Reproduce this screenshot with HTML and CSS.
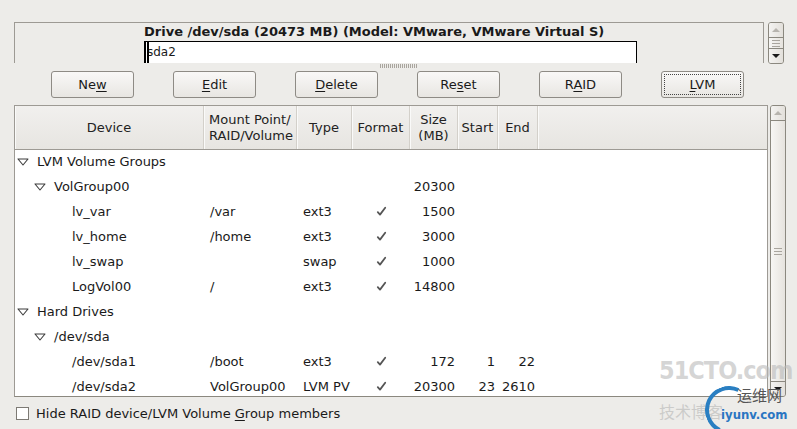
FILE: index.html
```html
<!DOCTYPE html>
<html lang="en">
<head>
    <meta charset="UTF-8">
    <title>Partitioning</title>
    <link rel="stylesheet" href="styles.css">
</head>
<body>
    <div class="drive-row">
        <div class="drive-frame">
            <div class="drive-info">
                <div class="drive-title">Drive /dev/sda (20473 MB) (Model: VMware, VMware Virtual S)</div>
                <div class="drive-bar"><span class="sel"></span>sda2</div>
            </div>
        </div>
        <div class="vscroll small">
            <div class="sb-btn up"><span class="arrow-up"></span></div>
            <div class="sb-thumb"><span class="grip"></span></div>
            <div class="sb-btn down"><span class="arrow-down"></span></div>
        </div>
    </div>

    <div class="pane-grip"><span></span></div>

    <div class="buttons">
        <button class="btn">Ne<u>w</u></button>
        <button class="btn"><u>E</u>dit</button>
        <button class="btn"><u>D</u>elete</button>
        <button class="btn">Re<u>s</u>et</button>
        <button class="btn">R<u>A</u>ID</button>
        <button class="btn focus"><u>L</u>VM</button>
    </div>

    <div class="tree-row">
        <div class="tree">
            <div class="grid head">
                <div class="th">Device</div>
                <div class="th left">Mount Point/<br>RAID/Volume</div>
                <div class="th">Type</div>
                <div class="th">Format</div>
                <div class="th">Size<br>(MB)</div>
                <div class="th">Start</div>
                <div class="th">End</div>
                <div class="th last"></div>
            </div>
            <div id="rows"></div>
        </div>
        <div class="vscroll big">
            <div class="sb-btn up"><span class="arrow-up"></span></div>
            <div class="sb-thumb"><span class="grip"></span></div>
            <div class="sb-btn down"><span class="arrow-down"></span></div>
        </div>
    </div>

    <label class="hide-opt"><span class="checkbox"></span><span>Hide RAID device/LVM Volume <u>G</u>roup members</span></label>

    <div class="watermark">
        <div class="wm-51">51CTO.com</div>
        <div class="wm-blog">技术博客</div>
        <div class="wm-ring"></div>
        <div class="wm-cn">运维网</div>
        <div class="wm-site">iyunv.com</div>
    </div>

    <script>
        const rows = [
            { lvl: 0, exp: true, dev: 'LVM Volume Groups' },
            { lvl: 1, exp: true, dev: 'VolGroup00', size: '20300' },
            { lvl: 2, dev: 'lv_var', mount: '/var', type: 'ext3', fmt: true, size: '1500' },
            { lvl: 2, dev: 'lv_home', mount: '/home', type: 'ext3', fmt: true, size: '3000' },
            { lvl: 2, dev: 'lv_swap', mount: '', type: 'swap', fmt: true, size: '1000' },
            { lvl: 2, dev: 'LogVol00', mount: '/', type: 'ext3', fmt: true, size: '14800' },
            { lvl: 0, exp: true, dev: 'Hard Drives' },
            { lvl: 1, exp: true, dev: '/dev/sda' },
            { lvl: 2, dev: '/dev/sda1', mount: '/boot', type: 'ext3', fmt: true, size: '172', start: '1', end: '22' },
            { lvl: 2, dev: '/dev/sda2', mount: 'VolGroup00', type: 'LVM PV', fmt: true, size: '20300', start: '23', end: '2610' }
        ];

        const expander = '<svg class="expander" width="12" height="8" viewBox="0 0 12 8"><polygon points="1,1 11,1 6,7" fill="#fff" stroke="#3c3c3c" stroke-width="1.1" stroke-linejoin="round"/></svg>';
        const check = '<svg width="11" height="11" viewBox="0 0 11 11"><path d="M1.8 6.2 L4 8.6 L9.2 1.8" fill="none" stroke="#555" stroke-width="1.8" stroke-linecap="round" stroke-linejoin="round"/></svg>';

        const box = document.getElementById('rows');
        rows.forEach(r => {
            const row = document.createElement('div');
            row.className = 'grid row';
            row.innerHTML =
                `<div class="td dev lvl${r.lvl}">${r.exp ? expander : ''}<span>${r.dev}</span></div>` +
                `<div class="td">${r.mount || ''}</div>` +
                `<div class="td">${r.type || ''}</div>` +
                `<div class="td center">${r.fmt ? check : ''}</div>` +
                `<div class="td num">${r.size || ''}</div>` +
                `<div class="td num">${r.start || ''}</div>` +
                `<div class="td num">${r.end || ''}</div>` +
                `<div class="td"></div>`;
            box.appendChild(row);
        });
    </script>
</body>
</html>
```

FILE: styles.css
```css
body {
    background-color: #edece9;
    color: #1a1a1a;
    font-family: "DejaVu Sans", sans-serif;
    font-size: 13px;
    margin: 0;
    padding: 0;
    width: 797px;
    height: 429px;
    overflow: hidden;
    position: relative;
}
u {
    text-decoration-thickness: 1px;
    text-underline-offset: 2px;
}

/* drive strip */
.drive-row {
    display: flex;
    padding: 22px 0 0 14px;
    height: 41px;
}
.drive-frame {
    width: 748px;
    border: 1px solid #9d9a94;
    border-bottom: none;
    background-color: #edece9;
}
.drive-info {
    margin-left: 129px;
}
.drive-title {
    font-weight: bold;
    height: 18px;
    line-height: 18px;
}
.drive-bar {
    width: 489px;
    height: 21px;
    line-height: 21px;
    background-color: #fff;
    border: 1px solid #000;
    border-bottom: none;
    border-left-width: 2px;
    font-size: 12px;
    padding-left: 1px;
    position: relative;
}
.drive-bar .sel {
    position: absolute;
    left: 1px;
    top: 0;
    bottom: 0;
    width: 2px;
    background-color: #000;
}
.drive-row .vscroll {
    margin-left: 4px;
    height: 40px;
}

/* scrollbars */
.vscroll {
    width: 14px;
    border: 1px solid #8b887f;
    border-radius: 3px;
    background-color: #e2dfda;
    display: flex;
    flex-direction: column;
    overflow: hidden;
}
.sb-btn {
    height: 14px;
    display: flex;
    align-items: center;
    justify-content: center;
    background: linear-gradient(to right, #f4f3f1, #e3e0db);
}
.sb-btn.up {
    border-bottom: 1px solid #8b887f;
}
.sb-btn.down {
    border-top: 1px solid #8b887f;
}
.sb-thumb {
    flex: 1;
    display: flex;
    align-items: center;
    justify-content: center;
    background: linear-gradient(to right, #f7f6f4, #e6e3de);
}
.grip {
    width: 8px;
    height: 5px;
    border-top: 1px solid #a9a59e;
    border-bottom: 1px solid #a9a59e;
    position: relative;
}
.grip::after {
    content: "";
    position: absolute;
    left: 0;
    right: 0;
    top: 2px;
    border-top: 1px solid #a9a59e;
}
.arrow-up {
    width: 0;
    height: 0;
    border-left: 4px solid transparent;
    border-right: 4px solid transparent;
    border-bottom: 4px solid #b7b4ae;
}
.arrow-down {
    width: 0;
    height: 0;
    border-left: 4px solid transparent;
    border-right: 4px solid transparent;
    border-top: 4px solid #1a1a1a;
}

/* paned grip */
.pane-grip {
    height: 8px;
    display: flex;
    justify-content: center;
}
.pane-grip span {
    margin-top: 1px;
    width: 38px;
    height: 4px;
    background: repeating-linear-gradient(to right, #a9a59e 0 1px, transparent 1px 2px);
}

/* buttons */
.buttons {
    display: flex;
    gap: 39px;
    padding-left: 51px;
    height: 27px;
}
.btn {
    width: 83px;
    height: 27px;
    font-family: "DejaVu Sans", sans-serif;
    font-size: 13px;
    color: #1a1a1a;
    border: 1px solid #8e8b85;
    border-radius: 3px;
    background: linear-gradient(to bottom, #f9f8f7, #e8e6e2);
    padding: 0;
}
.btn.focus {
    outline: 1px dotted #444;
    outline-offset: -4px;
}

/* tree view */
.tree-row {
    display: flex;
    margin-top: 7px;
    padding-left: 14px;
    height: 292px;
}
.tree {
    width: 752px;
    border: 1px solid #9d9a94;
    border-bottom-color: #8b887f;
    background-color: #fff;
    overflow: hidden;
}
.tree-row .vscroll {
    margin-left: 2px;
    height: 290px;
}
.grid {
    display: grid;
    grid-template-columns: 189px 93px 55px 58px 48px 40px 40px 1fr;
}
.head {
    height: 43px;
    border-bottom: 1px solid #9d9a94;
    background: linear-gradient(to bottom, #f1f0ee, #e7e5e1);
}
.th {
    display: flex;
    align-items: center;
    justify-content: center;
    text-align: center;
    line-height: 16px;
    color: #222;
    border-right: 1px solid #d3d0ca;
    box-shadow: inset 1px 0 0 #fafaf9;
}
.th.left {
    text-align: left;
    justify-content: flex-start;
    padding-left: 5px;
}
.th.last {
    border-right: none;
}
.row {
    height: 25px;
}
.td {
    display: flex;
    align-items: center;
    white-space: nowrap;
    padding-left: 6px;
    padding-bottom: 2px;
    color: #1a1a1a;
}
.td.center {
    justify-content: center;
    padding-left: 0;
}
.td.num {
    justify-content: flex-end;
    padding-left: 0;
    padding-right: 3px;
}
.td.dev {
    padding-left: 0;
}
.expander {
    margin-left: 2px;
    margin-right: 8px;
}
.lvl1 .expander {
    margin-left: 19px;
    margin-right: 8px;
}
.td.lvl2 {
    padding-left: 57px;
}

/* option */
.hide-opt {
    display: flex;
    align-items: center;
    margin: 7px 0 0 16px;
    height: 18px;
}
.checkbox {
    width: 11px;
    height: 11px;
    border: 1px solid #7d7a74;
    background-color: #fff;
    margin-right: 7px;
}

/* watermark overlay */
.watermark {
    position: absolute;
    left: 655px;
    top: 356px;
    width: 142px;
    height: 73px;
    pointer-events: none;
}
.wm-51 {
    position: absolute;
    left: 4px;
    top: 0;
    font-family: "DejaVu Sans Condensed", "DejaVu Sans", sans-serif;
    font-weight: bold;
    font-size: 25px;
    line-height: 30px;
    letter-spacing: -1px;
    color: rgba(185, 185, 185, 0.6);
}
.wm-blog {
    position: absolute;
    left: 4px;
    top: 44px;
    font-family: "Noto Sans CJK SC", sans-serif;
    font-size: 16px;
    line-height: 22px;
    color: rgba(170, 170, 170, 0.5);
}
.wm-ring {
    position: absolute;
    left: 50px;
    top: 30px;
    width: 40px;
    height: 40px;
    border-radius: 50%;
    border: 4px solid #2a7fc2;
    border-right-color: transparent;
    border-bottom-color: transparent;
    transform: rotate(-20deg);
}
.wm-cn {
    position: absolute;
    left: 82px;
    top: 30px;
    font-family: "Noto Sans CJK SC", sans-serif;
    font-size: 15px;
    line-height: 18px;
    color: #555;
}
.wm-site {
    position: absolute;
    left: 66px;
    top: 50px;
    font-family: "DejaVu Sans Condensed", "DejaVu Sans", sans-serif;
    font-weight: bold;
    font-size: 13px;
    line-height: 18px;
    color: #2a76c2;
}
```
